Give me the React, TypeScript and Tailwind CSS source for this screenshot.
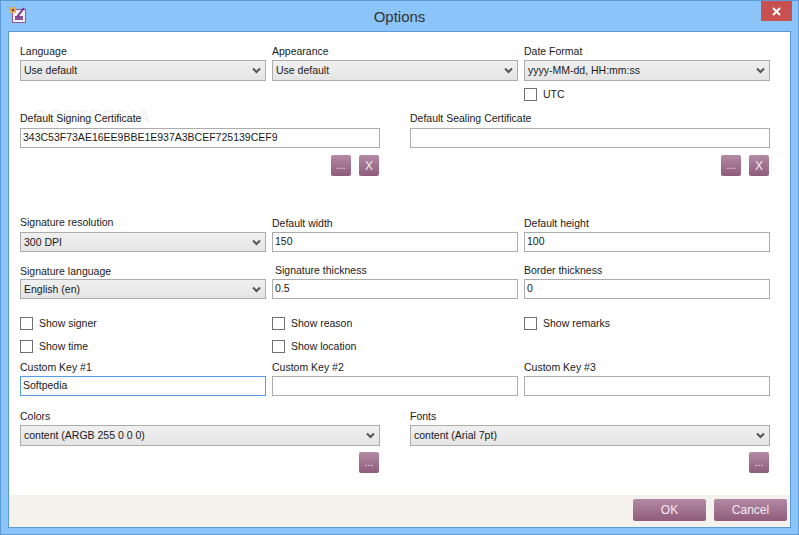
import React from "react";

function Label({ children, className = "" }: { children: React.ReactNode; className?: string }) {
  return <div className={"h-4 leading-4 text-[10.5px] text-[#1a1a1a] whitespace-nowrap " + className}>{children}</div>;
}
function Select({ value, className = "h-[21px]" }: { value: string; className?: string }) {
  return (
    <div className={"flex items-center justify-between border border-[#acacac] bg-gradient-to-b from-[#f0f0f0] to-[#e5e5e5] pl-[3px] pr-[4px] text-[10.5px] text-[#1a1a1a] " + className}>
      <span className="pt-px">{value}</span>
      <svg width="9" height="7" viewBox="0 0 9 7"><path d="M1 1.5 L4.5 5 L8 1.5" fill="none" stroke="#555" strokeWidth="2" /></svg>
    </div>
  );
}
function Input({ value = "", focused = false }: { value?: string; focused?: boolean }) {
  return (
    <div className={"h-5 flex items-center border px-[2px] text-[10.5px] text-[#1a1a1a] bg-white " + (focused ? "border-[#569de5]" : "border-[#acacac]")}>{value}</div>
  );
}
function Check({ label }: { label: string }) {
  return (
    <div className="flex items-center h-[13px] text-[10.5px] text-[#1a1a1a]">
      <span className="w-[13px] h-[13px] border border-[#707070] bg-white mr-[6px]" />
      {label}
    </div>
  );
}
function Btn({ children, className = "" }: { children: React.ReactNode; className?: string }) {
  return (
    <button className={"flex items-center justify-center rounded-[2px] bg-gradient-to-b from-[#b38aa4] to-[#8f5c7c] text-[#f4ecf2] " + className}>{children}</button>
  );
}

export default function App() {
  return (
    <div className="w-[799px] h-[535px] flex flex-col border border-[#5c9ad6] bg-[#8ac4f8] overflow-hidden font-['Liberation_Sans',Arial,sans-serif]">
      <div className="h-[30px] shrink-0 flex items-start relative">
        <svg className="ml-[9px] mt-[6px]" width="17" height="17" viewBox="0 0 17 17">
          <rect x="2.5" y="2.5" width="13" height="13" fill="#f4eef6" stroke="#8a5a9a" />
          <rect x="5" y="9" width="8" height="4" fill="#8a4f96" />
          <path d="M7 10 L14 1" stroke="#7a2f8a" strokeWidth="2" />
          <rect x="0" y="0" width="6" height="6" rx="1" fill="#e0a860" />
          <rect x="2" y="2" width="2" height="2" fill="#6a4020" />
        </svg>
        <div className="absolute left-0 right-0 top-[6px] text-center text-[15px] leading-[20px] text-[#333]">Options</div>
        <div className="ml-auto mr-[6px] w-[31px] h-5 bg-[#c75050] flex items-center justify-center">
          <svg width="9" height="9" viewBox="0 0 9 9"><path d="M1 1 L8 8 M8 1 L1 8" stroke="#fff" strokeWidth="2" /></svg>
        </div>
      </div>

      <div className="mx-[7px] mb-[6px] flex-1 flex flex-col border border-[#5c9ad6] bg-white">
        <div className="flex-1 pl-[11px] pr-[20px] pt-[11px] flex flex-col relative">
          <div className="absolute left-[25px] top-[75px] text-[#f4f4f4] text-[19px] font-bold tracking-[1px] leading-none pointer-events-none">SOFTPEDIA</div>
          <div className="absolute left-[36px] top-[102px] text-[#f6f6f6] text-[10.5px] leading-none pointer-events-none">www.softpedia.com</div>

          <div className="grid grid-cols-3 gap-x-[6px] relative">
            <div><Label className="mb-px">Language</Label><Select value="Use default" /></div>
            <div><Label className="mb-px">Appearance</Label><Select value="Use default" /></div>
            <div><Label className="mb-px">Date Format</Label><Select value="yyyy-MM-dd, HH:mm:ss" /></div>
          </div>
          <div className="grid grid-cols-3 gap-x-[6px] mt-[7px]">
            <div className="col-start-3"><Check label="UTC" /></div>
          </div>

          <div className="grid grid-cols-2 gap-x-[30px] mt-[9px] relative">
            <div>
              <Label className="mb-[2px]">Default Signing Certificate</Label>
              <Input value="343C53F73AE16EE9BBE1E937A3BCEF725139CEF9" />
              <div className="flex justify-end gap-2 mt-[7px] pr-px text-[10.5px]">
                <Btn className="w-5 h-[21px]">...</Btn>
                <Btn className="w-5 h-[21px] text-[12px]">X</Btn>
              </div>
            </div>
            <div>
              <Label className="mb-[2px]">Default Sealing Certificate</Label>
              <Input />
              <div className="flex justify-end gap-2 mt-[7px] pr-px text-[10.5px]">
                <Btn className="w-5 h-[21px]">...</Btn>
                <Btn className="w-5 h-[21px] text-[12px]">X</Btn>
              </div>
            </div>
          </div>

          <div className="grid grid-cols-3 gap-x-[6px] mt-[38px]">
            <div><Label className="mb-[2px]">Signature resolution</Label><Select value="300 DPI" className="h-5" /></div>
            <div><Label className="mb-[2px] pt-px">Default width</Label><Input value="150" /></div>
            <div><Label className="mb-[2px] pt-px">Default height</Label><Input value="100" /></div>
          </div>

          <div className="grid grid-cols-3 gap-x-[6px] mt-[11px]">
            <div><Label>Signature language</Label><Select value="English (en)" className="h-5" /></div>
            <div><Label className="pl-[3px] -mt-px mb-px">Signature thickness</Label><Input value="0.5" /></div>
            <div><Label className="-mt-px mb-px">Border thickness</Label><Input value="0" /></div>
          </div>

          <div className="grid grid-cols-3 gap-x-[6px] mt-[18px]">
            <Check label="Show signer" />
            <Check label="Show reason" />
            <Check label="Show remarks" />
          </div>
          <div className="grid grid-cols-3 gap-x-[6px] mt-[10px]">
            <Check label="Show time" />
            <Check label="Show location" />
          </div>

          <div className="grid grid-cols-3 gap-x-[6px] mt-[6px]">
            <div><Label className="mb-px">Custom Key #1</Label><Input value="Softpedia" focused /></div>
            <div><Label className="mb-px">Custom Key #2</Label><Input /></div>
            <div><Label className="mb-px">Custom Key #3</Label><Input /></div>
          </div>

          <div className="grid grid-cols-2 gap-x-[30px] mt-[12px]">
            <div>
              <Label className="mb-px">Colors</Label>
              <Select value="content (ARGB 255 0 0 0)" />
              <div className="flex justify-end mt-[6px] pr-px text-[10.5px]"><Btn className="w-5 h-[21px]">...</Btn></div>
            </div>
            <div>
              <Label className="mb-px">Fonts</Label>
              <Select value="content (Arial 7pt)" />
              <div className="flex justify-end mt-[6px] pr-px text-[10.5px]"><Btn className="w-5 h-[21px]">...</Btn></div>
            </div>
          </div>
        </div>
        <div className="h-8 shrink-0 bg-[#f5f2ee] flex items-start justify-end gap-2 pt-1 pr-[3px] text-[12px]">
          <Btn className="w-[73px] h-[22px]">OK</Btn>
          <Btn className="w-[73px] h-[22px]">Cancel</Btn>
        </div>
      </div>
    </div>
  );
}
